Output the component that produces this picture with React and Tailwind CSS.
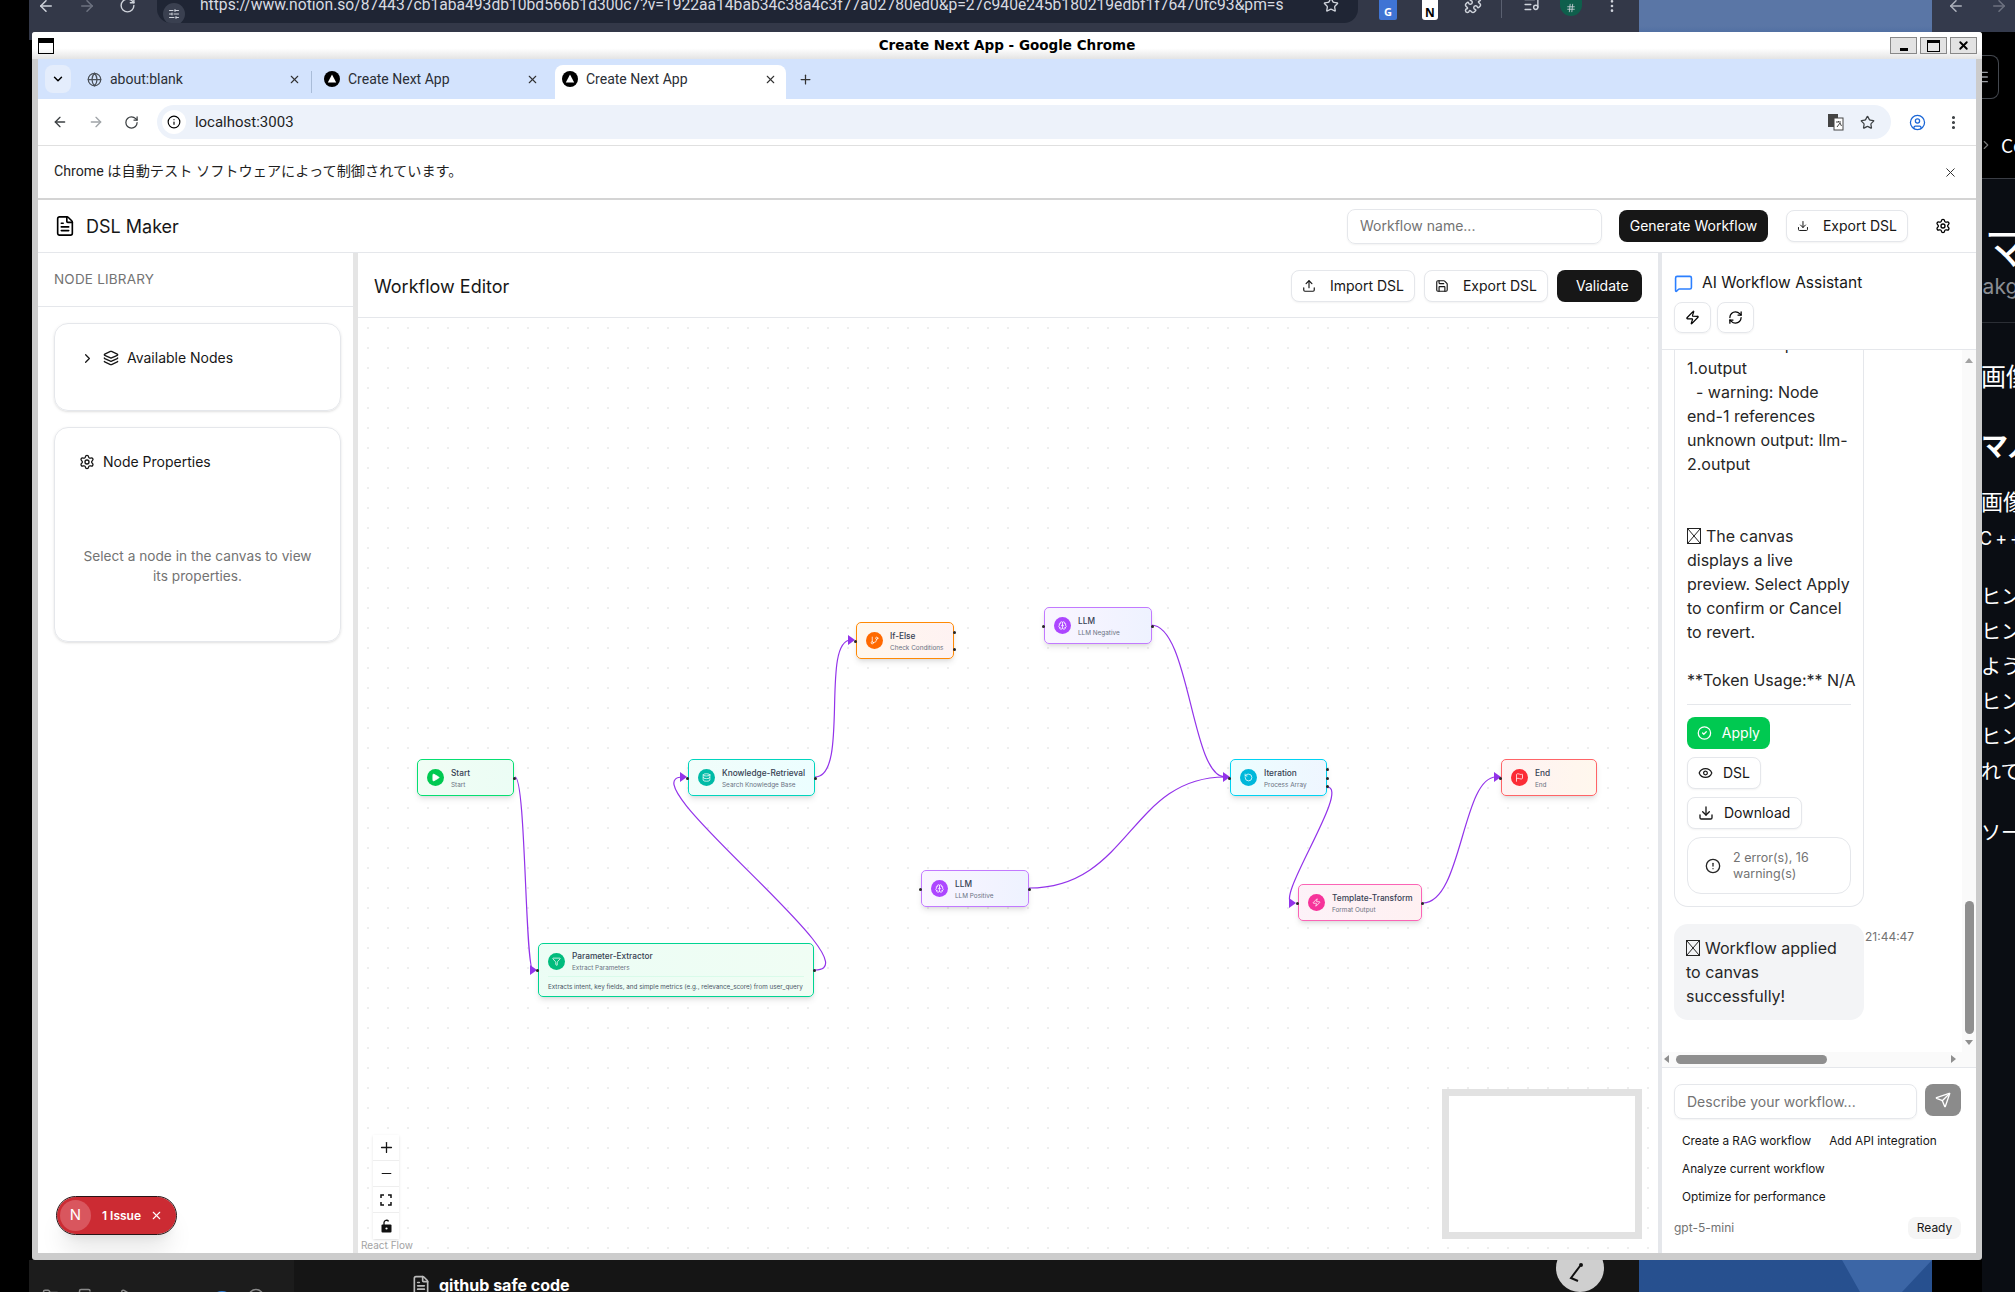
import {
  ArrowLeft, ArrowRight, RotateCw, Star, X, Plus, Minus, ChevronDown, ChevronRight, Globe, Info,
  CircleUser, EllipsisVertical, FileText, Download, Settings, Upload, Save, Layers, MessageSquare,
  Zap, RefreshCw, CircleCheck, Eye, CircleAlert, Send, Play, Database, GitBranch, Brain, Funnel,
  RotateCcw, Flag, SlidersHorizontal, Puzzle, ListMusic, Hash, Menu, Folder, Copy, Wifi, Circle,
} from "lucide-react";

const nodes = [
  { title: "Start", sub: "Start", Icon: Play, box: "left-[59px] top-[441px] w-[97px] h-[37px] border-green-400 from-green-50 to-emerald-50", dot: "bg-green-500", right: ["top-1/2"], left: [] },
  { title: "Knowledge-Retrieval", sub: "Search Knowledge Base", Icon: Database, box: "left-[330px] top-[441px] w-[127px] h-[37px] border-teal-400 from-teal-50 to-cyan-50", dot: "bg-teal-500", right: ["top-1/2"], left: ["top-1/2"] },
  { title: "If-Else", sub: "Check Conditions", Icon: GitBranch, box: "left-[498px] top-[304px] w-[98px] h-[37px] border-orange-400 from-orange-50 to-red-50", dot: "bg-orange-500", right: ["top-1/4", "top-3/4"], left: ["top-1/2"] },
  { title: "LLM", sub: "LLM Negative", Icon: Brain, box: "left-[686px] top-[289px] w-[108px] h-[37px] border-purple-400 from-purple-50 to-indigo-50", dot: "bg-purple-500", right: ["top-1/2"], left: ["top-1/2"] },
  { title: "LLM", sub: "LLM Positive", Icon: Brain, box: "left-[563px] top-[552px] w-[108px] h-[37px] border-purple-400 from-purple-50 to-indigo-50", dot: "bg-purple-500", right: ["top-1/2"], left: ["top-1/2"] },
  { title: "Iteration", sub: "Process Array", Icon: RotateCcw, box: "left-[872px] top-[441px] w-[97px] h-[37px] border-cyan-400 from-cyan-50 to-blue-50", dot: "bg-cyan-500", right: ["top-1/4", "top-1/2", "top-3/4"], left: ["top-1/2"] },
  { title: "Template-Transform", sub: "Format Output", Icon: Zap, box: "left-[940px] top-[566px] w-[124px] h-[37px] border-pink-400 from-pink-50 to-rose-50", dot: "bg-pink-500", right: ["top-1/2"], left: ["top-1/2"] },
  { title: "End", sub: "End", Icon: Flag, box: "left-[1143px] top-[441px] w-[96px] h-[37px] border-red-400 from-red-50 to-orange-50", dot: "bg-red-500", right: [], left: ["top-1/2"] },
];

const edges = [
  "M515,777 C526,777 525,970 533,970",
  "M815,777 C850,777 820,640 851,640",
  "M815,970 C880,970 623,777 683,777",
  "M1151,625 C1190,625 1191,777 1225,777",
  "M1029,888 C1130,888 1130,777 1225,777",
  "M1327,787 C1352,787 1272,903 1293,903",
  "M1423,903 C1462,903 1462,777 1496,777",
];

const arrows = [[537, 970], [855, 640], [687, 777], [1230, 777], [1296, 903], [1501, 777]];

const chatLines = [
  "unknown output: llm-",
  "1.output",
  "  - warning: Node",
  "end-1 references",
  "unknown output: llm-",
  "2.output",
  "",
  "",
  "BOX The canvas",
  "displays a live",
  "preview. Select Apply",
  "to confirm or Cancel",
  "to revert.",
  "",
  "**Token Usage:** N/A",
];

function Tofu() {
  return (
    <svg width="14" height="16" viewBox="0 0 14 16" className="inline-block align-[-2px] mr-[5px]" fill="none" stroke="#222" strokeWidth="1">
      <rect x="0.5" y="0.5" width="13" height="15" />
      <path d="M1 1 L13 15 M13 1 L1 15" />
    </svg>
  );
}

function NextFavicon() {
  return (
    <svg width="16" height="16" viewBox="0 0 16 16">
      <circle cx="8" cy="8" r="8" fill="#000" />
      <path d="M8 3.5 L12.2 11.5 H3.8 Z" fill="#fff" />
    </svg>
  );
}

function Btn({ icon: Icon, children, className = "" }) {
  return (
    <div className={`flex items-center gap-[14px] h-8 px-[10px] whitespace-nowrap rounded-lg border border-gray-200 bg-white shadow-xs text-sm text-neutral-900 ${className}`}>
      <Icon size={16} strokeWidth={2} />
      <span>{children}</span>
    </div>
  );
}

function Tab({ icon, title, active, sep }) {
  return (
    <div className={`relative flex items-center h-[34px] w-[231px] mr-[7px] pl-[7px] pr-[9px] pb-[6px] shrink-0 ${active ? "bg-white rounded-t-lg" : ""}`}>
      <div className="w-4 flex justify-center mr-[8px]">{icon}</div>
      <span className="flex-1 text-[14px] text-[#2a2e35]">{title}</span>
      <X size={13} strokeWidth={2} className="text-[#333]" />
      {sep && <div className="absolute -right-[2px] top-[6px] h-[22px] w-px bg-[#a9bcd8]" />}
    </div>
  );
}

function FlowNode({ node }) {
  const { Icon } = node;
  return (
    <div className={`absolute flex items-center gap-[7px] pl-[9px] rounded-[5px] border-[1.5px] bg-gradient-to-r shadow-md ${node.box}`}>
      <div className={`w-[17px] h-[17px] rounded-full flex items-center justify-center shrink-0 ${node.dot}`}>
        <Icon size={9} className="text-white" fill={node.title === "Start" ? "white" : "none"} />
      </div>
      <div className="flex flex-col pt-[2px] leading-none whitespace-nowrap">
        <span className="text-[8.3px] font-medium text-gray-700">{node.title}</span>
        <span className="text-[6.4px] mt-[5px] text-gray-500">{node.sub}</span>
      </div>
      {node.left.map((t) => <i key={t} className={`absolute -left-[3px] -mt-px w-[3px] h-[3px] rounded-full bg-neutral-800 ${t}`} />)}
      {node.right.map((t) => <i key={t} className={`absolute -right-[3px] -mt-px w-[3px] h-[3px] rounded-full bg-neutral-800 ${t}`} />)}
    </div>
  );
}

function ParamNode() {
  return (
    <div className="absolute left-[180px] top-[625px] w-[276px] h-[54px] rounded-[5px] border-[1.5px] border-emerald-400 bg-gradient-to-r from-emerald-50 to-green-50 shadow-md px-[9px]">
      <div className="flex items-center gap-[7px] h-[33px] pt-[2px] border-b border-emerald-100/70">
        <div className="w-[17px] h-[17px] rounded-full flex items-center justify-center bg-emerald-500">
          <Funnel size={9} className="text-white" />
        </div>
        <div className="flex flex-col pt-[2px] leading-none whitespace-nowrap">
          <span className="text-[8.3px] font-medium text-gray-700">Parameter-Extractor</span>
          <span className="text-[6.4px] mt-[5px] text-gray-500">Extract Parameters</span>
        </div>
      </div>
      <div className="text-[6.3px] leading-none mt-[7px] text-gray-600 whitespace-nowrap">Extracts intent, key fields, and simple metrics (e.g., relevance_score) from user_query</div>
      <i className="absolute -left-[3px] top-1/2 -mt-px w-[3px] h-[3px] rounded-full bg-neutral-800" />
      <i className="absolute -right-[3px] top-1/2 -mt-px w-[3px] h-[3px] rounded-full bg-neutral-800" />
    </div>
  );
}

function FlowControl({ children, last }) {
  return (
    <div className={`w-[26px] h-[26px] flex items-center justify-center bg-white text-neutral-900 ${last ? "" : "border-b border-[#eeeeee]"}`}>
      {children}
    </div>
  );
}

function Canvas() {
  return (
    <div className="relative flex-1 overflow-hidden bg-white bg-[radial-gradient(circle,#eeeeee_0.8px,transparent_1px)] [background-size:20px_20px]">
      <svg className="absolute left-0 top-0 w-full h-full" fill="none">
        <g transform="translate(-358,-318)">
          {edges.map((d) => <path key={d} d={d} stroke="#9333ea" strokeWidth="1.2" />)}
          {arrows.map(([x, y]) => <polygon key={`${x}-${y}`} points={`${x - 7},${y - 5} ${x},${y} ${x - 7},${y + 5}`} fill="#9333ea" />)}
        </g>
      </svg>
      {nodes.map((n) => <FlowNode key={n.sub} node={n} />)}
      <ParamNode />
      <div className="absolute left-[15px] bottom-[14px] flex flex-col shadow-sm">
        <FlowControl><Plus size={17} strokeWidth={1.8} /></FlowControl>
        <FlowControl><Minus size={15} strokeWidth={1.6} /></FlowControl>
        <FlowControl>
          <svg width="12" height="12" viewBox="0 0 12 12" fill="none" stroke="#111" strokeWidth="1.5"><path d="M1 4V1h3M8 1h3v3M11 8v3H8M4 11H1V8" /></svg>
        </FlowControl>
        <FlowControl last>
          <svg width="11" height="14" viewBox="0 0 11 14"><path d="M3 6V3.6A2.5 2.5 0 0 1 7.6 2.4" fill="none" stroke="#111" strokeWidth="1.3" /><rect x="0.5" y="5.5" width="10" height="8" rx="1" fill="#111" /><circle cx="5.5" cy="9.5" r="1.1" fill="#fff" /></svg>
        </FlowControl>
      </div>
      <div className="absolute left-[3px] bottom-[3px] text-[10px] leading-none text-[#a3a3a3]">React Flow</div>
      <div className="absolute right-[16px] bottom-[14px] w-[200px] h-[150px] bg-white border-[7px] border-[#e2e2e2]" />
    </div>
  );
}

function Sidebar() {
  return (
    <div className="w-[315px] flex flex-col bg-white">
      <div className="h-[54px] flex items-center pl-4 pb-[1px] border-b border-gray-200 text-[13.5px] text-[#737373] tracking-[0.2px]">NODE LIBRARY</div>
      <div className="pl-4 pr-[12px] pt-[16px] flex flex-col gap-4">
        <div className="h-[88px] rounded-[14px] border border-gray-200 shadow-sm pl-[25px] pt-[24px]">
          <div className="flex items-center gap-2 h-5 text-sm text-neutral-900">
            <ChevronRight size={15} />
            <Layers size={16} />
            <span>Available Nodes</span>
          </div>
        </div>
        <div className="h-[215px] rounded-[14px] border border-gray-200 shadow-sm pt-[24px]">
          <div className="flex items-center gap-2 h-5 pl-[24px] text-sm text-neutral-900">
            <Settings size={16} />
            <span>Node Properties</span>
          </div>
          <p className="mt-[74px] px-6 text-center text-[13.7px] leading-5 text-[#737373]">Select a node in the canvas to view its properties.</p>
        </div>
      </div>
    </div>
  );
}

function ChatPanel() {
  return (
    <div className="w-[314px] flex flex-col bg-white">
      <div className="h-[97px] border-b border-gray-200 pl-3 pt-5">
        <div className="flex items-center gap-[9px] h-5 text-[15.5px] text-neutral-900">
          <MessageSquare size={19} className="text-blue-500" />
          <span>AI Workflow Assistant</span>
        </div>
        <div className="flex gap-[6px] mt-[9px]">
          <div className="w-[37px] h-[31px] flex items-center justify-center rounded-lg border border-gray-200 shadow-xs"><Zap size={15} /></div>
          <div className="w-[37px] h-[31px] flex items-center justify-center rounded-lg border border-gray-200 shadow-xs"><RefreshCw size={15} /></div>
        </div>
      </div>

      <div className="h-[717px] flex flex-col">
        <div className="flex-1 flex min-h-0">
          <div className="flex-1 overflow-hidden pl-3">
            <div className="w-[190px] -mt-[18px] px-3 pb-[12px] border-x border-b border-gray-200 rounded-b-[14px] text-[16px] leading-6 text-neutral-800">
              {chatLines.map((line, i) => (
                <div key={i} className="h-6 whitespace-pre">
                  {line.startsWith("BOX ") ? <><Tofu />{line.slice(4)}</> : line}
                </div>
              ))}
              <div className="mt-[12px] border-t border-gray-200" />
              <div className="mt-[12px] w-[83px] h-8 flex items-center gap-[10px] px-[10px] rounded-lg bg-green-500 text-white text-sm"><CircleCheck size={16} /><span>Apply</span></div>
              <Btn icon={Eye} className="mt-2 w-[74px] !gap-[10px]">DSL</Btn>
              <Btn icon={Download} className="mt-2 w-[115px] !gap-[10px]">Download</Btn>
              <div className="mt-2 h-[57px] w-[164px] flex items-center rounded-[14px] border border-gray-200 pl-[17px]">
                <CircleAlert size={16} className="shrink-0" />
                <span className="ml-3 text-[12.5px] leading-4 text-[#737373]">2 error(s), 16<br />warning(s)</span>
              </div>
            </div>
            <div className="flex mt-[17px]">
              <div className="w-[190px] h-[96px] rounded-[14px] bg-gray-100 px-3 py-3 text-[16px] leading-6 text-neutral-800">
                <Tofu />Workflow applied<br />to canvas<br />successfully!
              </div>
              <span className="ml-[1px] mt-[5px] text-xs text-[#737373] leading-4">21:44:47</span>
            </div>
          </div>
          <div className="w-[14px] bg-[#fafafa] relative">
            <div className="absolute left-[3px] top-[8px] w-0 h-0 border-x-[4px] border-x-transparent border-b-[5px] border-b-[#a3a3a3]" />
            <div className="absolute left-[3px] top-[551px] w-[9px] h-[133px] rounded-full bg-[#8f8f8f]" />
            <div className="absolute left-[3px] bottom-[7px] w-0 h-0 border-x-[4px] border-x-transparent border-t-[5px] border-t-[#8f8f8f]" />
          </div>
        </div>
        <div className="h-[15px] bg-[#fafafa] relative">
          <div className="absolute left-[2px] top-[3px] w-0 h-0 border-y-[4px] border-y-transparent border-r-[5px] border-r-[#8f8f8f]" />
          <div className="absolute left-[14px] top-[3px] w-[151px] h-[9px] rounded-full bg-[#8f8f8f]" />
          <div className="absolute right-[20px] top-[3px] w-0 h-0 border-y-[4px] border-y-transparent border-l-[5px] border-l-[#8f8f8f]" />
        </div>
      </div>

      <div className="flex-1 border-t border-gray-200 px-3 pt-4">
        <div className="flex items-start gap-2">
          <div className="w-[243px] h-[35px] flex items-center pl-[12px] rounded-lg border border-gray-200 shadow-xs text-sm text-[#737373]">Describe your workflow...</div>
          <div className="w-9 h-8 flex items-center justify-center rounded-lg bg-[#8b8b8b]"><Send size={16} className="text-white" /></div>
        </div>
        <div className="flex flex-wrap gap-x-[2px] mt-[9px] w-[290px] text-[11.8px] text-neutral-900">
          <span className="h-7 px-2 flex items-center">Create a RAG workflow</span>
          <span className="h-7 px-2 flex items-center">Add API integration</span>
          <span className="h-7 px-2 flex items-center">Analyze current workflow</span>
          <span className="h-7 px-2 flex items-center">Optimize for performance</span>
        </div>
        <div className="flex items-center justify-between mt-[5px] pr-[3px]">
          <span className="text-xs text-[#737373]">gpt-5-mini</span>
          <span className="w-[53px] h-[22px] flex items-center justify-center rounded-lg bg-neutral-100 text-xs text-neutral-900">Ready</span>
        </div>
      </div>
    </div>
  );
}

function ChromeFrame() {
  return (
    <div className="font-['Roboto','Noto_Sans_CJK_JP',sans-serif]">
      <div className="h-10 bg-[#d3e3fd] flex items-end pl-[7px]">
        <div className="mb-[6px] mr-[8px] w-[26px] h-7 rounded-lg bg-[#e4edfc] flex items-center justify-center shrink-0"><ChevronDown size={14} strokeWidth={2.5} /></div>
        <Tab icon={<Globe size={15} className="text-[#4a5058]" />} title="about:blank" sep />
        <Tab icon={<NextFavicon />} title="Create Next App" />
        <Tab active icon={<NextFavicon />} title="Create Next App" />
        <Plus size={15} strokeWidth={2} className="mb-[12px] ml-[5px] text-[#333]" />
      </div>
      <div className="h-[47px] bg-white border-b border-[#e0e0e0] flex items-center pl-[14px] pr-[14px]">
        <ArrowLeft size={16} strokeWidth={2} className="text-[#3c4043]" />
        <ArrowRight size={16} strokeWidth={2} className="ml-5 text-[#a0a4a8]" />
        <RotateCw size={15} strokeWidth={2} className="ml-5 text-[#3c4043]" />
        <div className="ml-[18px] w-[1738px] h-[34px] rounded-full bg-[#edf2fa] flex items-center pr-0">
          <div className="w-[34px] h-[34px] rounded-full flex items-center justify-center"><div className="w-[24px] h-[24px] bg-white rounded-full flex items-center justify-center"><Info size={14} /></div></div>
          <span className="ml-[4px] flex-1 text-[15px] text-[#1f1f1f]">localhost:3003</span>
          <svg width="16" height="18" viewBox="0 0 16 18" className="mr-[16px]"><rect x="0" y="1" width="10" height="13" fill="#444" /><rect x="6" y="5" width="9" height="12" fill="#fff" stroke="#444" /><path d="M8 9h5M10.500 8v1M9 14l3-4 1.500 3" stroke="#444" fill="none" /></svg>
          <Star size={15} strokeWidth={2} className="mr-[16px] text-[#3c4043]" />
        </div>
        <CircleUser size={17} strokeWidth={1.8} className="ml-[18px] text-[#1a66d6]" />
        <EllipsisVertical size={17} strokeWidth={2.4} className="ml-[19px] text-[#3c4043]" />
      </div>
      <div className="h-[52px] bg-white flex items-center justify-between pl-4 pr-[18px] text-[14.2px] text-[#1f1f1f]">
        <span>Chrome は自動テスト ソフトウェアによって制御されています。</span>
        <X size={15} strokeWidth={1.6} className="text-[#333]" />
      </div>
      <div className="h-[2px] bg-[#d4d4d4]" />
    </div>
  );
}

function DslMaker() {
  return (
    <div className="flex-1 flex flex-col min-h-0 bg-white font-['Inter',sans-serif]">
      <div className="h-[53px] border-b border-gray-200 flex items-center pl-4 pr-[16px]">
        <FileText size={22} strokeWidth={1.8} />
        <span className="ml-[10px] pt-[1px] text-[18px] text-neutral-900">DSL Maker</span>
        <div className="ml-auto w-[255px] h-[35px] flex items-center pl-3 rounded-lg border border-gray-200 shadow-xs text-sm text-[#737373]">Workflow name...</div>
        <div className="ml-[17px] w-[149px] h-8 flex items-center justify-center rounded-lg bg-neutral-900 text-white text-sm">Generate Workflow</div>
        <Btn icon={Download} className="ml-[18px] w-[122px]">Export DSL</Btn>
        <Settings size={16} className="ml-[27px] mr-[9px]" />
      </div>
      <div className="flex-1 flex min-h-0">
        <Sidebar />
        <div className="w-[5px] bg-[#e5e5e5]" />
        <div className="flex-1 flex flex-col min-w-0">
          <div className="h-[65px] border-b border-gray-200 flex items-center pl-4 pr-[16px] pt-[1px] gap-[9px]">
            <span className="mr-auto pt-[2px] text-[18px] text-neutral-900">Workflow Editor</span>
            <Btn icon={Upload} className="w-[124px]">Import DSL</Btn>
            <Btn icon={Save} className="w-[124px]">Export DSL</Btn>
            <div className="w-[85px] h-8 flex items-center pl-[19px] rounded-lg bg-neutral-900 text-white text-sm">Validate</div>
          </div>
          <Canvas />
        </div>
        <div className="w-[4px] bg-[#e5e7eb]" />
        <ChatPanel />
      </div>
      <div className="absolute left-[19px] bottom-[19px] w-[119px] h-[37px] flex items-center rounded-full bg-[#cc2b33] outline outline-1 outline-[#2a1416] shadow-xl pl-[3px] text-white text-[12px] font-semibold">
        <div className="w-[31px] h-[31px] rounded-full bg-[#d9565e] flex items-center justify-center text-[15px] font-normal">N</div>
        <span className="ml-[11px]">1 Issue</span>
        <X size={13} className="ml-[9px]" />
      </div>
    </div>
  );
}

function WindowButton({ children }) {
  return (
    <div className="w-[27px] h-[17px] flex items-center justify-center border border-[#888] bg-[#e3e3e3]">{children}</div>
  );
}

function AppWindow() {
  return (
    <div className="absolute left-[32px] top-[32px] w-[1950px] h-[1228px] flex flex-col rounded-[3px] overflow-hidden bg-[#cccccc]">
      <div className="h-[27px] shrink-0 relative bg-gradient-to-b from-white from-60% to-[#e4e4e4] flex items-center justify-between pl-[6px] pr-[5px]">
        <div className="w-[16px] h-[16px] border border-black border-t-[5px]" />
        <span className="absolute left-0 right-0 text-center text-[13.5px] font-bold text-black font-['DejaVu_Sans',sans-serif]">Create Next App - Google Chrome</span>
        <div className="flex gap-[3px] z-10">
          <WindowButton><div className="w-[8px] h-[3px] mt-[7px] bg-black" /></WindowButton>
          <WindowButton><div className="w-[13px] h-[12px] border border-black border-t-[3px]" /></WindowButton>
          <WindowButton><X size={13} strokeWidth={3.5} /></WindowButton>
        </div>
      </div>
      <div className="relative flex-1 mx-[6px] mb-[7px] flex flex-col min-h-0 overflow-hidden">
        <ChromeFrame />
        <DslMaker />
      </div>
    </div>
  );
}

function RightStrip() {
  // the other window behind, cut off at the screen edge
  return (
    <div className="absolute left-[1982px] top-0 w-[33px] h-[1292px] overflow-hidden bg-[#0a0d13] text-white font-['Noto_Sans_CJK_JP',sans-serif] flex flex-col">
      <div className="h-[32px] shrink-0 bg-[#343a4c]" />
      <div className="h-[147px] shrink-0 bg-black border-b border-[#3a3d44] relative whitespace-nowrap">
        <div className="absolute left-0 top-[23px] w-[17px] h-[44px] border border-l-0 border-[#44484f] rounded-r-lg flex items-center"><Menu size={16} className="-ml-[8px] text-[#9a9da3]" /></div>
        <div className="absolute left-0 top-[103px] flex items-center"><ChevronRight size={14} className="text-[#777] -ml-[3px]" /><span className="ml-[8px] text-[19px] leading-none">Cc</span></div>
      </div>
      <div className="h-[144px] shrink-0 border-b border-[#2b2e35] overflow-hidden whitespace-nowrap">
        <div className="mt-[42px] ml-[2px] text-[46px] leading-[46px]">マ</div>
        <div className="-ml-[11px] mt-[6px] text-[21px] leading-[28px] text-[#8a8d93] font-['Inter',sans-serif]">zakg</div>
      </div>
      <div className="-ml-[1px] mt-[33px] text-[25px] leading-[38px] whitespace-nowrap">画像</div>
      <div className="-ml-[1px] mt-[32px] text-[27px] font-bold leading-[38px] whitespace-nowrap">マ人</div>
      <div className="-ml-[1px] mt-[18px] text-[22px] leading-[36px] whitespace-nowrap">画像</div>
      <div className="-ml-[3px] mt-[3px] text-[18px] leading-[36px] tracking-[3px] whitespace-nowrap font-['Inter',sans-serif]">C++</div>
      <div className="-ml-[1px] mt-[21px] text-[20px] leading-[35px] whitespace-nowrap">
        <div>ヒン</div><div>ヒン</div><div>よう</div><div>ヒン</div><div>ヒン</div><div>れて</div><div className="mt-[26px]">ソー</div>
      </div>
    </div>
  );
}

function BackgroundWindows() {
  return (
    <>
      <div className="absolute left-[29px] top-0 w-[1610px] h-[40px] bg-[#333848] flex items-start overflow-hidden text-[#cfd3db]">
        <ArrowLeft size={18} className="ml-[8px] -mt-[3px]" />
        <ArrowRight size={18} className="ml-[23px] -mt-[3px] text-[#6d7280]" />
        <RotateCw size={17} className="ml-[23px] -mt-[3px]" />
        <div className="ml-[21px] w-[1201px] h-[23px] rounded-b-[14px] bg-[#1f2534] flex items-end relative overflow-hidden">
          <div className="ml-[6px] mb-[-2px] w-[22px] h-[22px] rounded-full bg-[#3a4050] flex items-center justify-center"><SlidersHorizontal size={12} /></div>
          <span className="absolute left-[43px] -top-[7px] text-[15.65px] leading-6 text-[#d8dbe2] whitespace-nowrap font-['Roboto',sans-serif]">https://www.notion.so/874437cb1aba493db10bd566b1d300c7?v=1922aa14bab34c38a4c3f77a02780ed0&amp;p=27c940e245b180219edbf1f76470fc93&amp;pm=s</span>
          <Star size={16} className="absolute right-[19px] -top-[3px]" />
        </div>
        <div className="ml-[21px] w-[18px] h-[22px] -mt-[2px] rounded-b-[2px] bg-[#3f74d4] text-white text-[11px] font-bold text-center leading-[28px]">G</div>
        <div className="ml-[25px] w-[16px] h-[22px] -mt-[2px] rounded-b-[3px] bg-white text-black text-[12px] font-bold text-center leading-[30px]">N</div>
        <Puzzle size={18} className="ml-[26px] -mt-[4px]" />
        <div className="ml-[19px] w-px h-[18px] bg-[#5a6070]" />
        <ListMusic size={17} className="ml-[21px] -mt-[4px]" />
        <div className="ml-[20px] w-[22px] h-[26px] -mt-[10px] rounded-full bg-[#0f5f4c] flex items-center justify-center"><Hash size={10} className="mt-[10px]" /></div>
        <EllipsisVertical size={16} className="ml-[22px] -mt-[2px]" />
      </div>
      <div className="absolute left-[1639px] top-0 w-[293px] h-[1292px] bg-gradient-to-b from-[#5a76a6] from-2% to-[#27508f] to-5%">
        <svg className="absolute left-[203px] top-[1260px]" width="90" height="32" fill="none">
          <path d="M0 0 L18 32 H60 L90 0 Z" fill="#3c66a6" />
        </svg>
      </div>
      <div className="absolute left-[29px] top-[1260px] w-[265px] h-[32px] bg-[#1c1c1c] overflow-hidden flex items-start text-[#8a8a8a]">
        <Folder size={18} className="ml-[13px] mt-[28px]" />
        <Copy size={18} className="ml-[18px] mt-[28px]" />
        <Play size={18} className="ml-[22px] mt-[28px]" />
        <Wifi size={18} className="ml-[77px] mt-[28px] text-[#2f7fd8]" />
        <Circle size={18} className="ml-[16px] mt-[28px]" />
      </div>
      <div className="absolute left-[294px] top-[1260px] w-[1345px] h-[32px] bg-[#151515] overflow-hidden">
        <div className="flex items-center ml-[117px] mt-[13px] text-white font-bold text-[16px] leading-6 font-['Inter',sans-serif]">
          <FileText size={20} className="text-[#bbb]" />
          <span className="ml-[8px]">github safe code</span>
        </div>
        <div className="absolute left-[1262px] top-[-16px] w-[48px] h-[48px] rounded-full bg-[#cfcfcf] flex items-center justify-center">
          <svg width="24" height="20" viewBox="0 0 24 20" fill="none" stroke="#111" strokeWidth="2" className="mt-[8px]">
            <path d="M12 4 L3 16 L10 19" />
            <circle cx="13" cy="3" r="1" fill="#111" />
          </svg>
        </div>
      </div>
      <RightStrip />
      <div className="absolute left-[1932px] top-0 w-[83px] h-[32px] bg-[#343a4c] text-[#aeb2bc] flex items-start pl-[15px]">
        <ArrowLeft size={18} className="-mt-[3px]" />
        <ArrowRight size={18} className="ml-[25px] -mt-[3px] text-[#6d7280]" />
      </div>
    </>
  );
}

export default function App() {
  return (
    <div className="relative w-[2015px] h-[1292px] overflow-hidden bg-black">
      <BackgroundWindows />
      <AppWindow />
    </div>
  );
}
